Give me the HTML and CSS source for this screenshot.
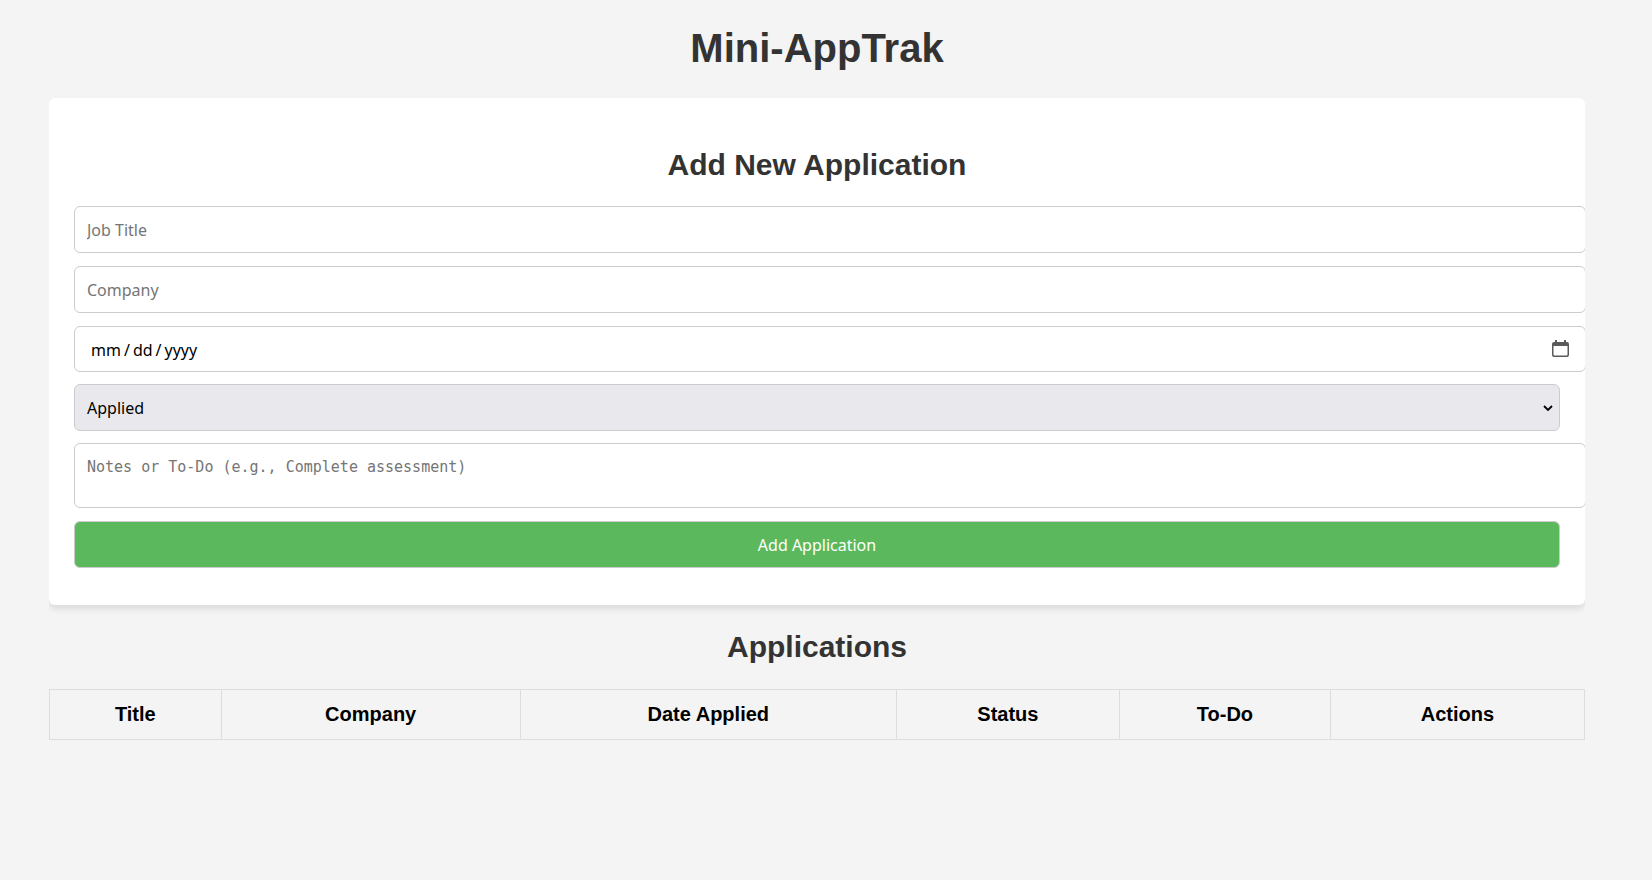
FILE: index.html
```html
<!DOCTYPE html>
<html lang="en">
<head>
  <meta charset="UTF-8" />
  <meta name="viewport" content="width=device-width, initial-scale=1.0" />
  <title>Mini-AppTrak</title>
  <link rel="stylesheet" href="styles.css">
</head>
<body>
  <main class="container">
    <h1>Mini-AppTrak</h1>

    <form id="appForm">
      <h2>Add New Application</h2>
      <input type="text" id="title" placeholder="Job Title" aria-label="Job Title" required />
      <input type="text" id="company" placeholder="Company" aria-label="Company" required />
      <div class="field date-field">
        <input type="date" id="date" aria-label="Date Applied" required />
        <svg class="icon calendar" viewBox="0 0 17 17" width="17" height="17" aria-hidden="true">
          <path d="M3 0h2v2h7V0h2v2h1a2 2 0 0 1 2 2v11a2 2 0 0 1-2 2H2a2 2 0 0 1-2-2V4a2 2 0 0 1 2-2h1zM1.500 6v8.500a1 1 0 0 0 1 1h12a1 1 0 0 0 1-1V6z" fill="#5b5b5b" fill-rule="evenodd" />
        </svg>
      </div>
      <div class="field">
        <select id="status" aria-label="Status">
          <option>Applied</option>
          <option>Interview</option>
          <option>Offer</option>
          <option>Rejected</option>
        </select>
        <svg class="icon arrow" viewBox="0 0 10 6" width="10" height="6" aria-hidden="true">
          <path d="M1 1l4 4 4-4" fill="none" stroke="#000" stroke-width="1.800" />
        </svg>
      </div>
      <textarea id="todo" rows="2" placeholder="Notes or To-Do (e.g., Complete assessment)" aria-label="Notes or To-Do"></textarea>
      <button type="submit">Add Application</button>
    </form>

    <h2>Applications</h2>
    <table>
      <thead>
        <tr>
          <th>Title</th>
          <th>Company</th>
          <th>Date Applied</th>
          <th>Status</th>
          <th>To-Do</th>
          <th>Actions</th>
        </tr>
      </thead>
      <tbody id="appList"></tbody>
    </table>
  </main>
</body>
</html>
```
FILE: styles.css
```css
body {
  font-family: Arial, "Liberation Sans", sans-serif;
  font-size: 20px;
  margin: 0;
  padding: 25px 67px 25px 49px;
  background-color: #f4f4f4;
}
.container {
  overflow: hidden;
}
h1, h2 {
  text-align: center;
  color: #333;
}
h1 {
  font-size: 40px;
  line-height: 46px;
  margin: 0 0 27px;
}
h2 {
  font-size: 30px;
  line-height: 34px;
  margin: 25px 0;
}
form {
  background: #fff;
  padding: 25px;
  border-radius: 6px;
  box-shadow: 0 4px 6px rgba(0, 0, 0, 0.1);
}
form h2 {
  margin-bottom: 24px;
}
input, select, textarea, button {
  display: block;
  box-sizing: content-box;
  width: 100%;
  height: 21px;
  margin: 12px 0;
  padding: 13px 12px 11px;
  border: 1px solid #ccc;
  border-radius: 6px;
  font-family: "Noto Sans", sans-serif;
  font-size: 16px;
  line-height: 21px;
}
input::placeholder, textarea::placeholder {
  color: #757575;
}
input[type="text"] {
  margin: 13px 0;
}
.field {
  position: relative;
}
.icon {
  position: absolute;
  pointer-events: none;
}
.calendar {
  right: -9px;
  top: 14px;
}
.arrow {
  right: 7px;
  top: 21px;
}
input[type="date"] {
  height: 20px;
}
input[type="date"]::-webkit-datetime-edit {
  padding-left: 3px;
}
input[type="date"]::-webkit-datetime-edit-text {
  padding: 0 2px;
}
input[type="date"]::-webkit-calendar-picker-indicator {
  opacity: 0;
}
select, button {
  box-sizing: border-box;
  height: 47px;
}
select {
  appearance: none;
  background-color: #e9e9ed;
  color: #000;
}
textarea {
  height: 39px;
  resize: none;
  overflow: auto;
  font-family: "DejaVu Sans Mono", monospace;
  font-size: 15px;
}
button {
  margin-top: 13px;
  background-color: #5cb85c;
  color: white;
  cursor: pointer;
}
table {
  width: 100%;
  border-collapse: collapse;
}
th, td {
  border: 1px solid #ddd;
  padding: 13px;
  line-height: 23px;
  text-align: center;
}
```
